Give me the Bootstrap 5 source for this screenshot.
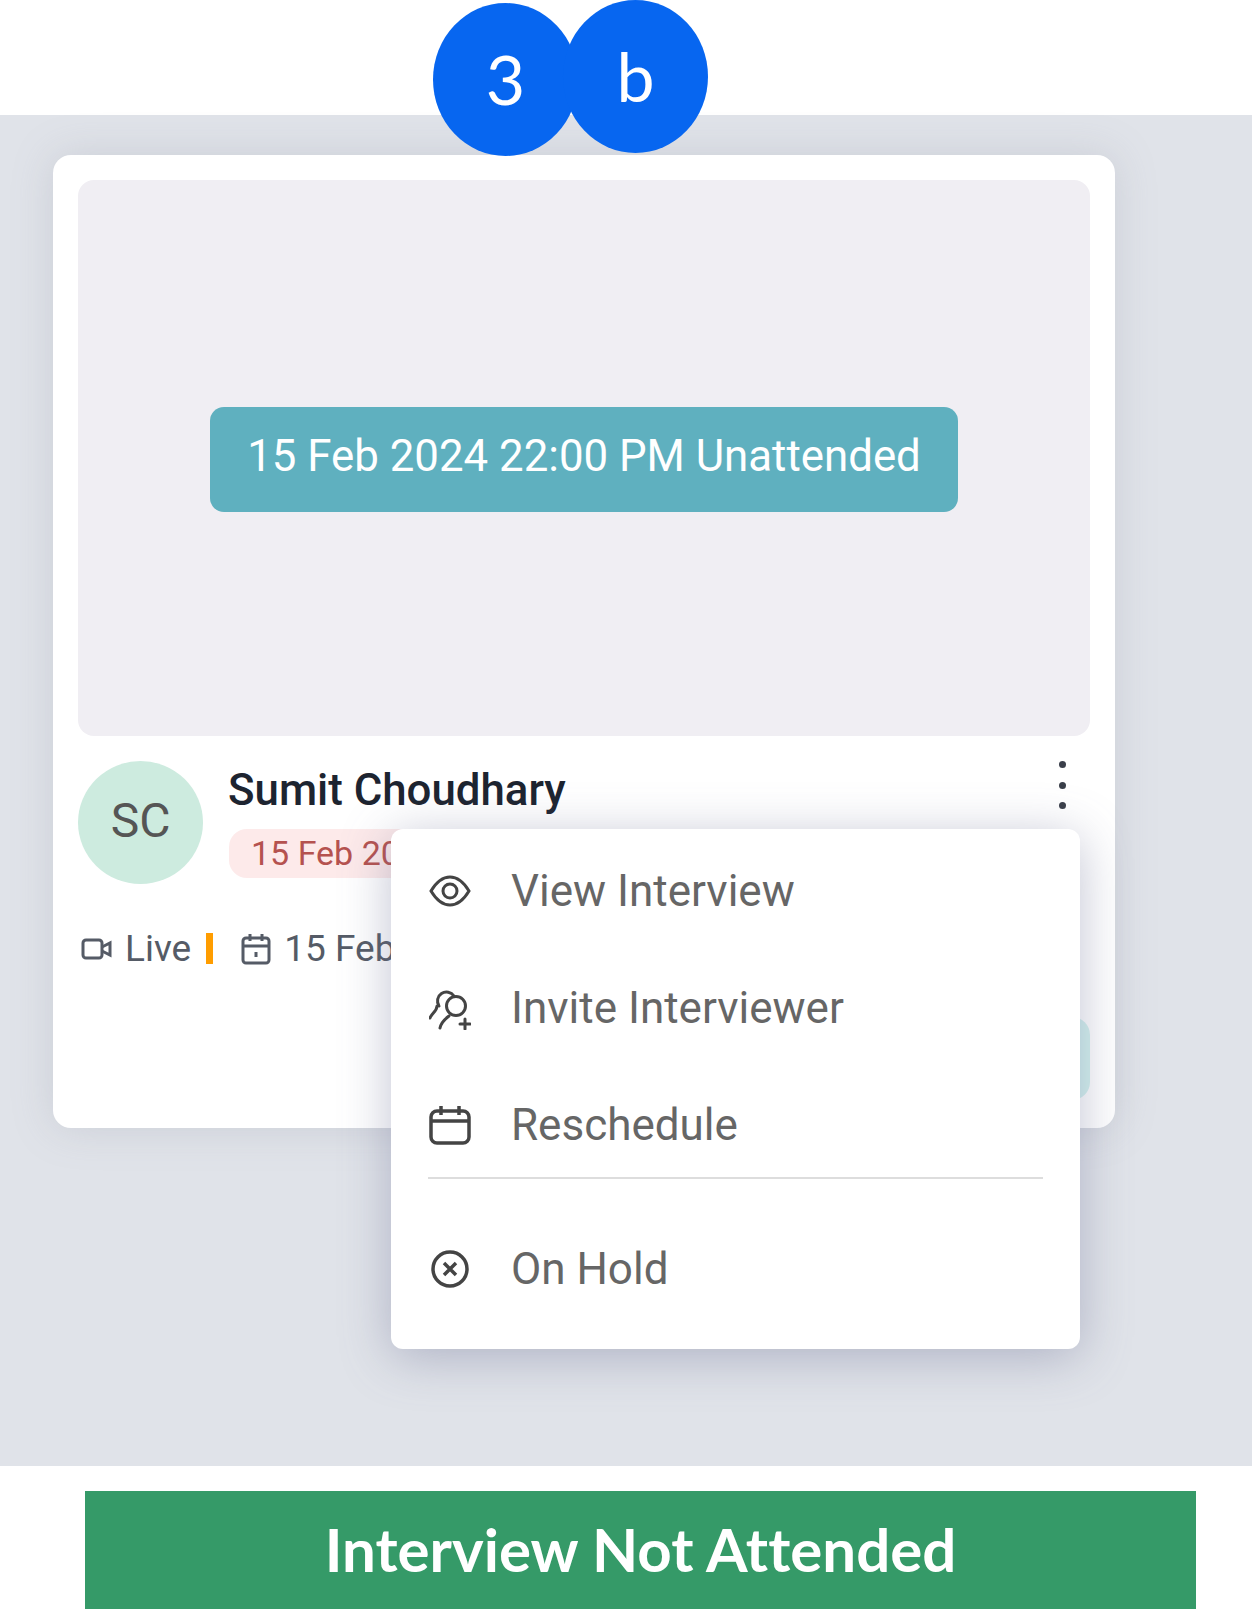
<!doctype html>
<html lang="en">
<head>
  <meta charset="utf-8">
  <title>Interview Not Attended</title>
  <link href="https://cdn.jsdelivr.net/npm/bootstrap@5.3.0/dist/css/bootstrap.min.css" rel="stylesheet">
  <style>
    html, body { height: 1609px; overflow: hidden; background: #fff; }
    body { font-family: Roboto, sans-serif; position: relative; }
    .step-dot { position: absolute; background: #0766f0; color: #fff; border-radius: 50%; width: 145px; height: 153px; font-family: Lato, sans-serif; font-size: 68px; line-height: 1; padding-bottom: 2px; }
    .step-one { left: 433px; top: 3px; }
    .step-two { left: 563px; top: 0; }
    .top-gap { height: 115px; }
    .stage { height: 1351px; background: #e0e3e9; padding: 40px 0 0 53px; }
    .iv-card { width: 1062px; height: 973px; background: #fff; border-radius: 18px; padding: 25px; position: relative; box-shadow: 0 0 40px rgba(140,145,160,.25); }
    .preview { height: 556px; background: #f0eef3; border-radius: 16px; }
    .status-pill { width: 748px; height: 105px; background: #5fb0bf; color: #fff; border-radius: 14px; font-size: 43.8px; margin-top: 3px; padding-bottom: 6px; }
    .avatar-sc { width: 125px; height: 123px; background: #cdebdf; color: #555; border-radius: 50%; font-size: 48px; flex: none; padding-bottom: 4px; }
    .person { margin-top: 25px; }
    .person-info { margin-left: 2px; }
    .iv-name { font-size: 43.8px; font-weight: 500; color: #1d2430; line-height: 50px; margin-top: 4px; margin-left: -1px; }
    .date-chip { width: 300px; height: 49px; background: #fdeaea; color: #b5524f; border-radius: 18px; font-size: 34px; padding-left: 22px; margin-top: 14px; white-space: nowrap; overflow: hidden; }
    .meta-row { font-size: 37px; color: #555b66; margin-top: 37px; white-space: nowrap; margin-left: 3px; }
    .meta-row .vid-icon { margin-right: 12px; }
    .meta-row .cal-icon { margin-right: 13px; }
    .bar-sep { width: 7px; height: 31px; background: #ff9d00; margin: 0 28px 0 15px; }
    .kebab { position: absolute; left: 1006px; top: 606px; width: 7px; display: flex; flex-direction: column; gap: 13.5px; }
    .kebab i { display: block; width: 7px; height: 7px; border-radius: 50%; background: #3a3f4a; }
    .ghost-btn { position: absolute; right: 25px; top: 862px; width: 300px; height: 83px; background: #d4f2ef; border-radius: 18px; }
    .iv-menu { position: absolute; left: 338px; top: 674px; width: 689px; height: 520px; background: #fff; border-radius: 12px; box-shadow: 0 8px 50px rgba(105,110,145,.42); padding: 3px 37px 0; color: #666; font-size: 44px; }
    .iv-menu .entry { height: 117px; gap: 40px; padding-left: 1px; }
    .iv-menu .entry-tall { height: 180px; }
    .iv-menu svg { flex: none; }
    .iv-menu hr { margin: -6px 0 0; border-top: 2px solid #ddd; opacity: 1; }
    .banner-wrap { padding: 25px 56px 0 85px; }
    .done-banner { height: 118px; background: #359a68; color: #fff; font-family: Lato, sans-serif; font-weight: 700; font-size: 60px; font-variant-ligatures: none; padding-bottom: 3px; }
  </style>
</head>
<body>
  <div class="top-gap"></div>
  <div class="stage">
    <div class="iv-card">
      <div class="preview d-flex align-items-center justify-content-center">
        <div class="status-pill d-flex align-items-center justify-content-center">15 Feb 2024 22:00 PM Unattended</div>
      </div>
      <div class="person d-flex gap-4">
        <div class="avatar-sc d-flex align-items-center justify-content-center">SC</div>
        <div class="person-info">
          <div class="iv-name">Sumit Choudhary</div>
          <div class="date-chip d-flex align-items-center">15 Feb 2024</div>
        </div>
      </div>
      <div class="meta-row d-flex align-items-center">
        <svg class="vid-icon" width="32" height="26" viewBox="0 0 32 26" fill="none" stroke="#555b66" stroke-width="3"><rect x="2" y="4" width="19" height="18" rx="3"/><path d="M21 11l8-4v12l-8-4"/></svg>
        <span>Live</span><span class="bar-sep"></span>
        <svg class="cal-icon" width="30" height="32" viewBox="0 0 30 32" fill="none" stroke="#555b66" stroke-width="3"><rect x="2" y="5" width="26" height="25" rx="3"/><path d="M2 13h26M9 1v7M21 1v7M15 19v5"/></svg>
        <span>15 Feb 2024</span>
      </div>
      <div class="ghost-btn"></div>
      <div class="kebab"><i></i><i></i><i></i></div>
      <div class="iv-menu">
        <div class="entry d-flex align-items-center">
          <svg width="42" height="32" viewBox="0 0 42 32" fill="none" stroke="#444" stroke-width="3"><path d="M2 16C8 6 14 2 21 2s13 4 19 14c-6 10-12 14-19 14S8 26 2 16z"/><circle cx="21" cy="16" r="7"/></svg>
          <span>View Interview</span>
        </div>
        <div class="entry d-flex align-items-center">
          <svg width="42" height="44" viewBox="0 0 42 44" fill="none" stroke="#444" stroke-width="3" stroke-linecap="round"><path d="M10 20A8.5 8.5 0 1 1 25 10"/><circle cx="27" cy="20" r="9.5"/><path d="M8 20c0 5-5 7-7 12M20 30c-4 3-8 7-9 12M36 33v10M31 38h10"/></svg>
          <span>Invite Interviewer</span>
        </div>
        <div class="entry d-flex align-items-center">
          <svg width="42" height="40" viewBox="0 0 42 40" fill="none" stroke="#444" stroke-width="3.5"><rect x="2" y="6" width="38" height="32" rx="6"/><path d="M2 16h38M12 1v9M30 1v9"/></svg>
          <span>Reschedule</span>
        </div>
        <hr>
        <div class="entry entry-tall d-flex align-items-center">
          <svg width="42" height="38" viewBox="0 0 42 38" fill="none" stroke="#444" stroke-width="3.5"><circle cx="21" cy="19" r="17"/><path d="M15 13l12 12M27 13L15 25"/></svg>
          <span>On Hold</span>
        </div>
      </div>
    </div>
  </div>
  <div class="banner-wrap">
    <div class="done-banner d-flex align-items-center justify-content-center">Interview Not Attended</div>
  </div>
  <div class="step-dot step-one d-flex align-items-center justify-content-center">3</div>
  <div class="step-dot step-two d-flex align-items-center justify-content-center">b</div>
  <script src="https://cdn.jsdelivr.net/npm/bootstrap@5.3.0/dist/js/bootstrap.bundle.min.js"></script>
</body>
</html>
